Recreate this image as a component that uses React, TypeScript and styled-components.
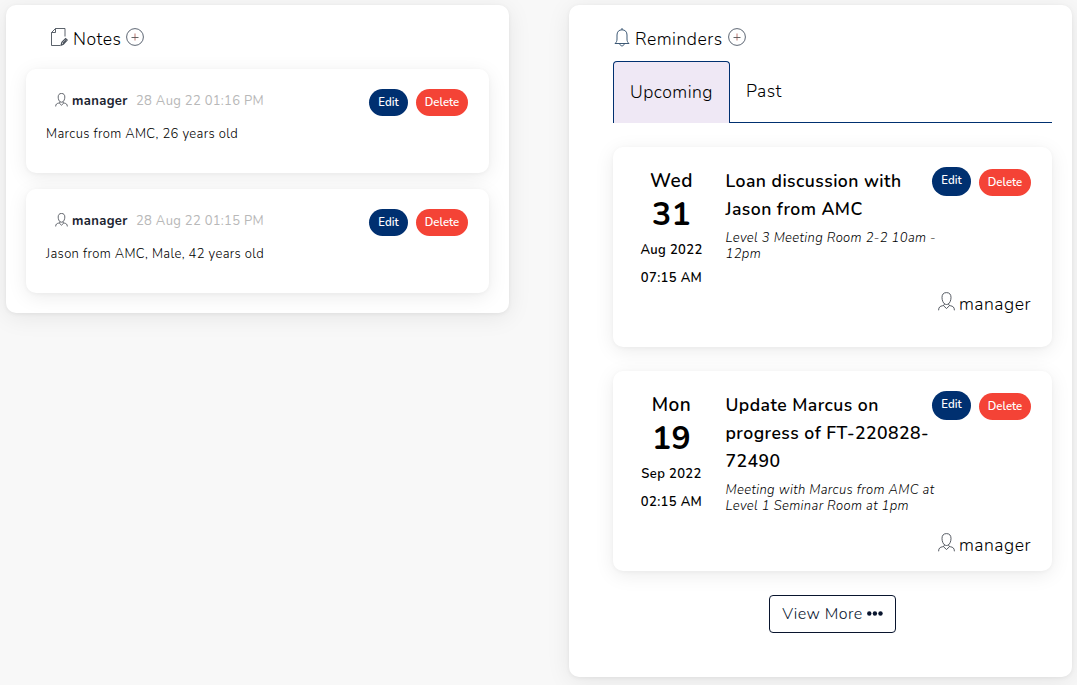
import React from "react";
import styled, { createGlobalStyle } from "styled-components";

const GlobalStyle = createGlobalStyle`
  * { box-sizing: border-box; }
  body {
    margin: 0;
    background: #f8f8f8;
    color: #000;
    font-family: Nunito, Lato, "Open Sans", sans-serif;
    font-size: 17.6px;
    font-weight: 320;
    line-height: 28px;
    letter-spacing: 0.5px;
  }
  button { font-family: inherit; font-weight: inherit; cursor: pointer; }
  h2, h3, p { margin: 0; font-weight: inherit; }
`;

const Page = styled.main`
  display: flex;
  align-items: flex-start;
  gap: 60px;
  width: 1077px;
  height: 685px;
  padding: 5px 5px 0 6px;
  overflow: hidden;
`;

const Panel = styled.section<{ $height: number; $inset: number }>`
  width: 503px;
  height: ${(p) => p.$height}px;
  padding: 20px 20px 0 ${(p) => p.$inset}px;
  border-radius: 10px;
  background: #fff;
  box-shadow: 0 4px 24px rgba(0, 0, 0, 0.08), 0 1px 4px rgba(0, 0, 0, 0.06);
`;

const Heading = styled.header<{ $indent: number; $height: number }>`
  display: flex;
  height: ${(p) => p.$height}px;
  padding-left: ${(p) => p.$indent}px;
  svg { flex: none; margin-top: 3px; }
`;

const Title = styled.h2<{ $width: number }>`
  width: ${(p) => p.$width}px;
  margin: 0 5px;
  font-size: 17.6px;
  line-height: 28px;
  white-space: nowrap;
`;

const Card = styled.article`
  border-radius: 10px;
  background: #fff;
  box-shadow: 0 4px 20px rgba(0, 0, 0, 0.08), 0 1px 4px rgba(0, 0, 0, 0.04);
`;

const NoteCard = styled(Card)`
  height: 104px;
  padding: 20px 21px 0 20px;
  & + & { margin-top: 16px; }
`;

const NoteTop = styled.div`
  display: flex;
  justify-content: space-between;
  height: 30px;
`;

const NoteMeta = styled.div`
  display: flex;
  padding-left: 9px;
  font-size: 13px;
  line-height: 24px;
  white-space: nowrap;
  svg { margin: 4px 4px 0 0; }
`;

const Author = styled.strong`
  width: 55px;
  margin-right: 9px;
  font-weight: 700;
  letter-spacing: 0.35px;
  color: #1b2430;
`;

const Stamp = styled.time`
  color: #b8b8b8;
  font-weight: 400;
  letter-spacing: 0.3px;
`;

const NoteText = styled.p`
  font-size: 13px;
  line-height: 30px;
  letter-spacing: 0.37px;
`;

const Actions = styled.div`
  display: flex;
  align-items: flex-end;
  align-self: flex-start;
  flex: none;
  gap: 8px;
`;

const Pill = styled.button<{ $tone: "edit" | "delete"; $tall?: boolean }>`
  width: ${(p) => (p.$tone === "edit" ? 39 : 52)}px;
  height: ${(p) => (p.$tall ? 29 : 27)}px;
  padding: 0 0 ${(p) => (p.$tall ? 2 : 0)}px;
  border: 0;
  border-radius: 15px;
  background: ${(p) => (p.$tone === "edit" ? "#003070" : "#f44336")};
  color: #fff;
  font-size: 11.4px;
  font-weight: 600;
  line-height: 27px;
  letter-spacing: 0;
`;

const Tabs = styled.nav`
  display: flex;
  height: 62px;
  border-bottom: 1px solid #003070;
`;

const Tab = styled.button<{ $active?: boolean }>`
  height: ${(p) => (p.$active ? 62 : 60)}px;
  width: ${(p) => (p.$active ? 117 : 68)}px;
  padding: ${(p) => (p.$active ? "0 0 2px" : "0")};
  border: ${(p) => (p.$active ? "1px solid #003070" : "0")};
  border-bottom: 0;
  border-radius: 4px 4px 0 0;
  background: ${(p) => (p.$active ? "#efe8f5" : "transparent")};
  color: inherit;
  font-size: 17.6px;
  letter-spacing: 0.48px;
`;

const ReminderCard = styled(Card)`
  position: relative;
  display: flex;
  height: 200px;
  margin-top: 24px;
  padding: 20px 21px 0 19px;
`;

const DateColumn = styled.div`
  display: flex;
  flex-direction: column;
  align-items: center;
  flex: none;
  width: 79px;
  color: #000;
  font-weight: 600;
`;

const Weekday = styled.span`
  font-size: 19px;
  line-height: 28px;
  letter-spacing: 0.5px;
`;

const DayNumber = styled.span`
  margin-bottom: 1px;
  font-size: 32px;
  line-height: 40px;
  font-weight: 660;
  letter-spacing: 0.4px;
`;

const DateLine = styled.span`
  font-size: 13px;
  line-height: 28px;
  letter-spacing: 0.36px;
  white-space: nowrap;
`;

const Details = styled.div`
  flex: none;
  width: 206.5px;
  margin-left: 14.5px;
  white-space: nowrap;
`;

const Line = styled.span`
  display: block;
`;

const ReminderTitle = styled.h3`
  color: #000;
  font-size: 17.6px;
  line-height: 28px;
  font-weight: 600;
  letter-spacing: 0.45px;
`;

const Description = styled.p`
  margin-top: 7px;
  font-size: 13px;
  line-height: 16px;
  font-style: italic;
  letter-spacing: 0.38px;
`;

const Owner = styled.footer<{ $bottom: number }>`
  position: absolute;
  right: 21px;
  bottom: ${(p) => p.$bottom}px;
  display: flex;
  line-height: 28px;
  svg { margin: 2px 4px 0 0; }
`;

const ViewMore = styled.button`
  display: flex;
  align-items: center;
  justify-content: center;
  gap: 4px;
  width: 127px;
  height: 38px;
  margin: 24px auto 0 156px;
  padding: 0;
  border: 1px solid #09152e;
  border-radius: 4px;
  background: #fff;
  color: #09152e;
  font-size: 16px;
  letter-spacing: 0.45px;
  white-space: nowrap;
  svg { margin-bottom: 2px; }
`;

const UserIcon = ({ small = false }: { small?: boolean }) => (
  <svg width={small ? 13 : 17} height={small ? 14 : 19} viewBox="0 0 17 19" fill="none" stroke="#3a4049" strokeWidth={small ? 1.05 : 0.85}>
    <path d="M8.500.6C5.300.6 4 2.600 4 5.500c0 3 1.300 5.500 2.600 6.400 1.200.8 2.600.8 3.800 0C11.700 11 13 8.500 13 5.500 13 2.600 11.700.6 8.500.6Z" />
    <path d="M.6 18.300c0-3.300 1.700-4.100 3.700-4.500 1.500-.3 2.100-.6 2.100-2.100M16.400 18.300c0-3.300-1.700-4.100-3.700-4.500-1.500-.3-2.100-.6-2.100-2.100M5.400 13.600l3.100 2.900 3.100-2.900" />
  </svg>
);

const PlusIcon = () => (
  <svg width="18" height="18" viewBox="0 0 18 18" fill="none" stroke="#4b5563" strokeWidth=".9">
    <circle cx="9" cy="9" r="8.400" />
    <path d="M9 5.500v7" stroke="#b4685e" />
    <path d="M5.500 9.500h7" stroke="#555" />
  </svg>
);

const NoteIcon = () => (
  <svg width="17" height="19" viewBox="0 0 17 19" fill="none" stroke="#4a515b" strokeWidth=".9">
    <path d="M9 17.500H.5v-13l4-4h9.500v8M.5 4.500h4v-4" />
    <path d="m10 17.300.8-3 3.800-3.800 1.700 1.500-3.900 4.200-2.400 1.100ZM11.800 15.500l3.300-3.400" strokeWidth="1.100" />
  </svg>
);

const BellIcon = () => (
  <svg width="16" height="19" viewBox="0 0 16 19" fill="none" stroke="#33506e" strokeWidth=".95">
    <path d="M1 15.500c1.300-1.200 2-2.300 2-4.500V7c0-3.300 2-5.200 5-5.200S13 3.700 13 7v4c0 2.200.7 3.300 2 4.500H1Z" />
    <path d="M8 0v1.800M5.800 15.800c.3 2.800 4.100 2.800 4.400 0" />
  </svg>
);

const DotsIcon = () => (
  <svg width="16" height="5" viewBox="0 0 16 5" fill="#09152e">
    <circle cx="2.300" cy="2.500" r="2.200" />
    <circle cx="7.900" cy="2.500" r="2.200" />
    <circle cx="13.500" cy="2.500" r="2.200" />
  </svg>
);

const notes = [
  { time: "28 Aug 22 01:16 PM", text: "Marcus from AMC, 26 years old" },
  { time: "28 Aug 22 01:15 PM", text: "Jason from AMC, Male, 42 years old" },
];

const reminders = [
  {
    weekday: "Wed", day: "31", month: "Aug 2022", time: "07:15 AM", bottom: 29,
    title: ["Loan discussion with", "Jason from AMC"],
    body: ["Level 3 Meeting Room 2-2 10am -", "12pm"],
  },
  {
    weekday: "Mon", day: "19", month: "Sep 2022", time: "02:15 AM", bottom: 12,
    title: ["Update Marcus on", "progress of FT-220828-", "72490"],
    body: ["Meeting with Marcus from AMC at", "Level 1 Seminar Room at 1pm"],
  },
];

const Lines = ({ rows }: { rows: string[] }) => (
  <>{rows.map((r) => <Line key={r}>{r}</Line>)}</>
);

export default function App() {
  return (
    <>
      <GlobalStyle />
      <Page>
        <Panel $height={308} $inset={20}>
          <Heading $indent={25} $height={44}>
            <NoteIcon />
            <Title $width={48}>Notes</Title>
            <PlusIcon />
          </Heading>
          {notes.map((n) => (
            <NoteCard key={n.time}>
              <NoteTop>
                <NoteMeta>
                  <UserIcon small />
                  <Author>manager</Author>
                  <Stamp>{n.time}</Stamp>
                </NoteMeta>
                <Actions>
                  <Pill $tone="edit">Edit</Pill>
                  <Pill $tone="delete">Delete</Pill>
                </Actions>
              </NoteTop>
              <NoteText>{n.text}</NoteText>
            </NoteCard>
          ))}
        </Panel>
        <Panel $height={672} $inset={44}>
          <Heading $indent={1} $height={36}>
            <BellIcon />
            <Title $width={88}>Reminders</Title>
            <PlusIcon />
          </Heading>
          <Tabs>
            <Tab $active>Upcoming</Tab>
            <Tab>Past</Tab>
          </Tabs>
          {reminders.map((r) => (
            <ReminderCard key={r.day}>
              <DateColumn>
                <Weekday>{r.weekday}</Weekday>
                <DayNumber>{r.day}</DayNumber>
                <DateLine>{r.month}</DateLine>
                <DateLine>{r.time}</DateLine>
              </DateColumn>
              <Details>
                <ReminderTitle><Lines rows={r.title} /></ReminderTitle>
                <Description><Lines rows={r.body} /></Description>
              </Details>
              <Actions>
                <Pill $tone="edit" $tall>Edit</Pill>
                <Pill $tone="delete">Delete</Pill>
              </Actions>
              <Owner $bottom={r.bottom}><UserIcon />manager</Owner>
            </ReminderCard>
          ))}
          <ViewMore>View More <DotsIcon /></ViewMore>
        </Panel>
      </Page>
    </>
  );
}
